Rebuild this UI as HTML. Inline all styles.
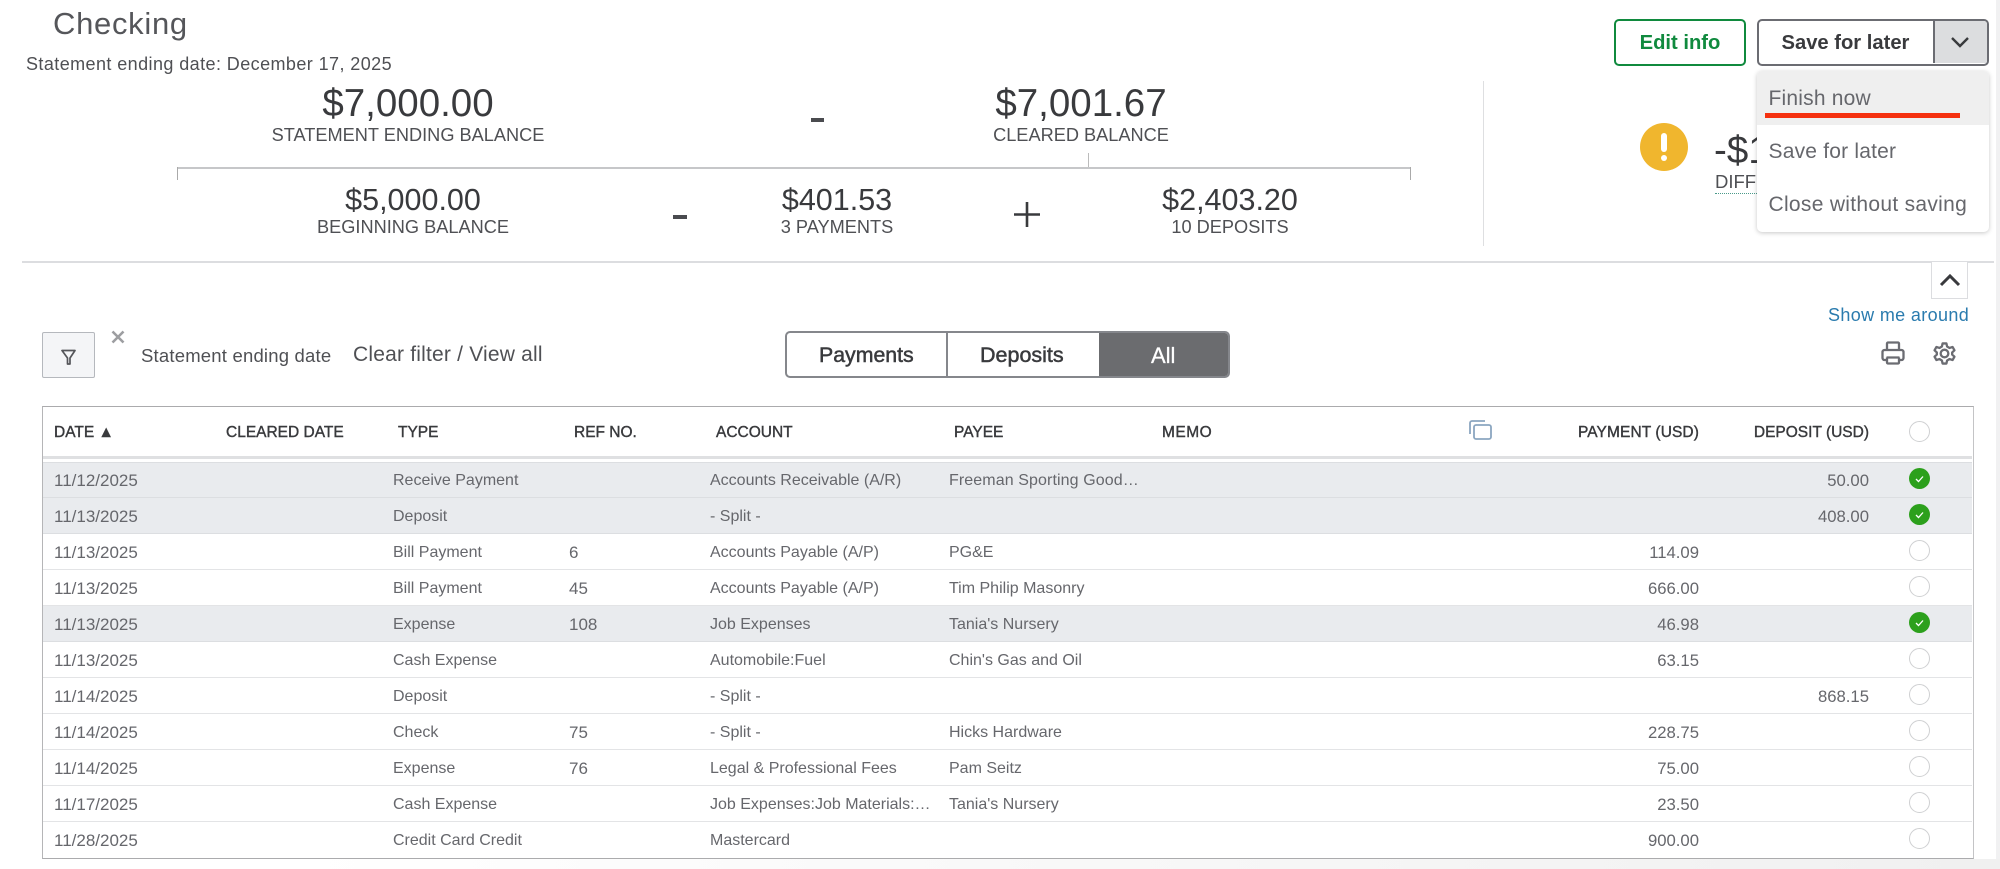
<!DOCTYPE html>
<html lang="en"><head><meta charset="utf-8"><title>Reconcile - Checking</title>
<style>
*{box-sizing:border-box}
html,body{margin:0;padding:0;background:#fff}
body{width:2000px;height:869px;position:relative;overflow:hidden;font-family:"Liberation Sans",sans-serif;color:#393a3d}
.a{position:absolute;white-space:nowrap}
.c{position:absolute;white-space:nowrap;text-align:center;transform:translateX(-50%)}
.big{font-size:38.500px;line-height:40px;color:#393a3d}
.mid{font-size:30.500px;line-height:32px;color:#393a3d}
.lab{font-size:18.200px;line-height:20px;color:#4f5054}
.bar{position:absolute;background:#c6c7c9}
.btn{position:absolute;background:#fff;border-radius:5px;font-size:20.200px;font-weight:bold;text-align:center}
.hd{position:absolute;top:424px;font-size:15.500px;line-height:18px;color:#393a3d;white-space:nowrap;-webkit-text-stroke:.4px}
.r{position:absolute;left:43px;width:1929px;height:36px;border-bottom:1px solid #e3e4e6;font-size:16px;color:#66676c}
.r.s{background:#e9ebee;border-bottom-color:#dcdee1}
.r span{position:absolute;top:9px;line-height:20px;white-space:nowrap}
.r .d,.r .n{font-size:17px}
.r .pay,.r .dep{font-size:16.700px}
.d{left:11px}.t{left:350px}.n{left:526px}.ac{left:667px}.p{left:906px}
.pay{right:273px}.dep{right:103px}
.o{position:absolute;left:1866px;top:6px;width:21px;height:21px;border:1px solid #cfd0d2;border-radius:50%;background:#fff}
.k{position:absolute;left:1866px;top:6px}
.m{position:absolute;left:11.500px;font-size:21px;line-height:24px;color:#66676c;letter-spacing:.2px;white-space:nowrap}
</style></head><body>

<div class="a" style="left:53px;top:6px;font-size:31px;line-height:36px;letter-spacing:.7px;color:#55565a">Checking</div>
<div class="a" style="left:26px;top:54px;font-size:18px;line-height:21px;letter-spacing:.42px;color:#4f5054">Statement ending date: December 17, 2025</div>

<div class="c big" style="left:408px;top:84px">$7,000.00</div>
<div class="c lab" style="left:408px;top:125px">STATEMENT ENDING BALANCE</div>
<div class="a" style="left:811px;top:118px;width:13px;height:4px;background:#4a4b4f"></div>
<div class="c big" style="left:1081px;top:84px">$7,001.67</div>
<div class="c lab" style="left:1081px;top:125px">CLEARED BALANCE</div>

<div class="bar" style="left:177px;top:167px;width:1234px;height:2px"></div>
<div class="bar" style="left:177px;top:167px;width:1px;height:13px;background:#aaa"></div>
<div class="bar" style="left:1410px;top:167px;width:1px;height:13px;background:#aaa"></div>
<div class="bar" style="left:1088px;top:153px;width:1px;height:14px;background:#bbb"></div>

<div class="c mid" style="left:413px;top:184px">$5,000.00</div>
<div class="c lab" style="left:413px;top:217px">BEGINNING BALANCE</div>
<div class="a" style="left:673px;top:215px;width:14px;height:4px;background:#4a4b4f"></div>
<div class="c mid" style="left:837px;top:184px">$401.53</div>
<div class="c lab" style="left:837px;top:217px">3 PAYMENTS</div>
<svg class="a" style="left:1014px;top:202px" width="26" height="25"><path d="M13 0V25M0 12.500H26" stroke="#393a3d" stroke-width="2.600" fill="none"/></svg>
<div class="c mid" style="left:1230px;top:184px">$2,403.20</div>
<div class="c lab" style="left:1230px;top:217px">10 DEPOSITS</div>

<div class="a" style="left:1483px;top:81px;width:1px;height:165px;background:#dedfe1"></div>
<div class="a" style="left:1640px;top:123px;width:48px;height:48px;border-radius:50%;background:#f0b62e"></div>
<div class="a" style="left:1661px;top:133px;width:6px;height:19px;background:#fff;border-radius:3px"></div>
<div class="a" style="left:1661px;top:155px;width:6px;height:6px;background:#fff;border-radius:50%"></div>
<div class="a big" style="left:1714px;top:131px">-$1</div>
<div class="a lab" style="left:1715px;top:172px;font-size:18.500px;border-bottom:1px dotted #4a9a8a;padding-bottom:1px">DIFFERENCE</div>

<div class="a" style="left:22px;top:261px;width:1972px;height:2px;background:#dcdde0"></div>

<!-- buttons -->
<div class="btn" style="left:1614px;top:19px;width:132px;height:47px;border:2px solid #108a3e;color:#108a3e;line-height:44px">Edit info</div>
<div class="btn" style="left:1757px;top:19px;width:232px;height:47px;border:2.500px solid #6b6c72;color:#393a3d;line-height:44px;overflow:hidden;text-align:left;padding-left:22.500px">Save for later
  <div style="position:absolute;left:173.500px;top:0;width:56px;height:42px;background:#dcdddf;border-left:2.500px solid #6b6c72"></div>
</div>
<svg class="a" style="left:1950px;top:35px" width="20" height="14"><path d="M2 3L10 11L18 3" stroke="#393a3d" stroke-width="2.400" fill="none"/></svg>

<!-- menu -->
<div class="a" style="left:1757px;top:71px;width:232px;height:161px;background:#fff;border-radius:5px;box-shadow:0 1px 5px rgba(0,0,0,.22);z-index:5;overflow:hidden">
  <div style="position:absolute;left:0;top:0;width:232px;height:54px;background:#efefef"></div>
  <div style="position:absolute;left:8px;top:42px;width:195px;height:4.500px;background:#f5300f"></div>
  <div class="m" style="top:16px">Finish now</div>
  <div class="m" style="top:69px">Save for later</div>
  <div class="m" style="top:122px;letter-spacing:.3px">Close without saving</div>
</div>

<!-- collapse + show me -->
<div class="a" style="left:1931px;top:262px;width:37px;height:37px;border:1px solid #dcdde0;border-top:0;background:#fff"></div>
<svg class="a" style="left:1938px;top:270px" width="24" height="18"><path d="M3 15L12 6L21 15" stroke="#393a3d" stroke-width="3" fill="none"/></svg>
<div class="a" style="left:1828px;top:304px;font-size:18px;line-height:22px;letter-spacing:.36px;color:#2a7bae">Show me around</div>
<svg class="a" style="left:1881px;top:341px" width="24" height="24" viewBox="0 0 24 24" fill="none" stroke="#6b6c72" stroke-width="2.300"><path d="M6 9V2.500A1 1 0 0 1 7 1.500H17A1 1 0 0 1 18 2.500V9M6 19H3.500A2 2 0 0 1 1.500 17V11A2 2 0 0 1 3.500 9H20.500A2 2 0 0 1 22.500 11V17A2 2 0 0 1 20.500 19H18M5.500 16.500H18.500M6 16.500V21.500A1 1 0 0 0 7 22.500H17A1 1 0 0 0 18 21.500V16.500"/></svg>
<svg class="a" style="left:1932.500px;top:341.500px" width="23" height="23" viewBox="0 0 24 24" fill="none" stroke="#6b6c72" stroke-width="2.400"><circle cx="12" cy="12" r="4"/><path d="M10 1.500H14L14.700 4.700L17.300 6.200L20.400 5.200L22.400 8.700L20 10.900V13.100L22.400 15.300L20.400 18.800L17.300 17.800L14.700 19.300L14 22.500H10L9.300 19.300L6.700 17.800L3.600 18.800L1.600 15.300L4 13.100V10.900L1.600 8.700L3.600 5.200L6.700 6.200L9.300 4.700Z" stroke-linejoin="round"/></svg>

<!-- filter -->
<div class="a" style="left:42px;top:332px;width:53px;height:46px;background:#f4f5f7;border:1px solid #b5b8bd;border-radius:2px"></div>
<svg class="a" style="left:61px;top:349px" width="15" height="17"><path d="M1 1.500H14L9 9V15H6.500V9Z" fill="none" stroke="#55565a" stroke-width="1.700" stroke-linejoin="round"/></svg>
<svg class="a" style="left:111px;top:330px" width="14" height="14"><path d="M1.500 1.500L12.500 12.500M12.500 1.500L1.500 12.500" stroke="#9d9ea1" stroke-width="2.600"/></svg>
<div class="a" style="left:141px;top:344.500px;font-size:18.500px;line-height:21px;letter-spacing:.2px;color:#4f5054">Statement ending date</div>
<div class="a" style="left:353px;top:342px;font-size:21px;line-height:25px;letter-spacing:.2px;color:#4f5054">Clear filter / View all</div>

<!-- toggle -->
<div class="a" style="left:785px;top:331px;width:445px;height:47px;border:2px solid #85878c;border-radius:5px;background:#fff;overflow:hidden">
  <div style="position:absolute;left:159px;top:0;width:2px;height:43px;background:#85878c"></div>
  <div style="position:absolute;left:312px;top:-2px;width:135px;height:47px;background:#6b6c6f"></div>
</div>
<div class="a" style="left:819px;top:343px;font-size:21.300px;line-height:25px;-webkit-text-stroke:.5px;color:#393a3d">Payments</div>
<div class="a" style="left:980px;top:343px;font-size:21.500px;line-height:25px;-webkit-text-stroke:.5px;color:#393a3d">Deposits</div>
<div class="a" style="left:1151px;top:343px;font-size:22px;line-height:25px;color:#fff;-webkit-text-stroke:.3px">All</div>

<!-- table -->
<div class="a" style="left:42px;top:406px;width:1932px;height:453px;border:1px solid #ababad;border-left-color:#b5b5b7;border-right-color:#c4c4c6;background:#fff"></div>
<div class="hd" style="left:54px">DATE &#9650;</div>
<div class="hd" style="left:226px">CLEARED DATE</div>
<div class="hd" style="left:398px">TYPE</div>
<div class="hd" style="left:574px">REF NO.</div>
<div class="hd" style="left:716px">ACCOUNT</div>
<div class="hd" style="left:954px">PAYEE</div>
<div class="hd" style="left:1162px;letter-spacing:.5px">MEMO</div>
<svg class="a" style="left:1468px;top:420px" width="25" height="20" fill="none" stroke="#8ba6c0" stroke-width="1.800"><rect x="6" y="5" width="17" height="14" rx="2"/><path d="M2 14V3A2 2 0 0 1 4 1H17"/></svg>
<div class="hd" style="right:301px;letter-spacing:.1px">PAYMENT (USD)</div>
<div class="hd" style="right:131px">DEPOSIT (USD)</div>
<div class="a" style="left:1909px;top:421px;width:21px;height:21px;border:1px solid #cfd0d2;border-radius:50%"></div>
<div class="a" style="left:43px;top:456px;width:1929px;height:3px;background:#dfe0e2"></div>

<div class="r s" style="top:462px"><span class="d">11/12/2025</span><span class="t">Receive Payment</span><span class="ac">Accounts Receivable (A/R)</span><span class="p" style="letter-spacing:.1px">Freeman Sporting Good…</span><span class="dep">50.00</span>
<svg class="k" width="21" height="21"><circle cx="10.500" cy="10.500" r="10.500" fill="#2ca01c"/><path d="M7 11L9.500 13.500L14 8.500" stroke="#fff" stroke-width="1.300" fill="none"/></svg></div>
<div class="r s" style="top:498px"><span class="d">11/13/2025</span><span class="t">Deposit</span><span class="ac">- Split -</span><span class="dep">408.00</span>
<svg class="k" width="21" height="21"><circle cx="10.500" cy="10.500" r="10.500" fill="#2ca01c"/><path d="M7 11L9.500 13.500L14 8.500" stroke="#fff" stroke-width="1.300" fill="none"/></svg></div>
<div class="r" style="top:534px"><span class="d">11/13/2025</span><span class="t">Bill Payment</span><span class="n">6</span><span class="ac">Accounts Payable (A/P)</span><span class="p">PG&amp;E</span><span class="pay">114.09</span><i class="o"></i></div>
<div class="r" style="top:570px"><span class="d">11/13/2025</span><span class="t">Bill Payment</span><span class="n">45</span><span class="ac">Accounts Payable (A/P)</span><span class="p">Tim Philip Masonry</span><span class="pay">666.00</span><i class="o"></i></div>
<div class="r s" style="top:606px"><span class="d">11/13/2025</span><span class="t">Expense</span><span class="n">108</span><span class="ac">Job Expenses</span><span class="p">Tania's Nursery</span><span class="pay">46.98</span>
<svg class="k" width="21" height="21"><circle cx="10.500" cy="10.500" r="10.500" fill="#2ca01c"/><path d="M7 11L9.500 13.500L14 8.500" stroke="#fff" stroke-width="1.300" fill="none"/></svg></div>
<div class="r" style="top:642px"><span class="d">11/13/2025</span><span class="t">Cash Expense</span><span class="ac">Automobile:Fuel</span><span class="p">Chin's Gas and Oil</span><span class="pay">63.15</span><i class="o"></i></div>
<div class="r" style="top:678px"><span class="d">11/14/2025</span><span class="t">Deposit</span><span class="ac">- Split -</span><span class="dep">868.15</span><i class="o"></i></div>
<div class="r" style="top:714px"><span class="d">11/14/2025</span><span class="t">Check</span><span class="n">75</span><span class="ac">- Split -</span><span class="p">Hicks Hardware</span><span class="pay">228.75</span><i class="o"></i></div>
<div class="r" style="top:750px"><span class="d">11/14/2025</span><span class="t">Expense</span><span class="n">76</span><span class="ac">Legal &amp; Professional Fees</span><span class="p">Pam Seitz</span><span class="pay">75.00</span><i class="o"></i></div>
<div class="r" style="top:786px"><span class="d">11/17/2025</span><span class="t">Cash Expense</span><span class="ac">Job Expenses:Job Materials:…</span><span class="p">Tania's Nursery</span><span class="pay">23.50</span><i class="o"></i></div>
<div class="r" style="top:822px;border-bottom:0"><span class="d">11/28/2025</span><span class="t">Credit Card Credit</span><span class="ac">Mastercard</span><span class="pay">900.00</span><i class="o"></i></div>
<div class="a" style="left:43px;top:462px;width:1929px;height:1px;background:#dcdee1"></div>

<!-- page edge and bottom fade -->
<div class="a" style="left:1996px;top:0;width:4px;height:869px;background:#f1f1f2"></div>
<div class="a" style="left:300px;top:859px;width:1700px;height:10px;background:linear-gradient(90deg,#fff,#f6f6f6 60%,#f0f0f0)"></div>
</body></html>
